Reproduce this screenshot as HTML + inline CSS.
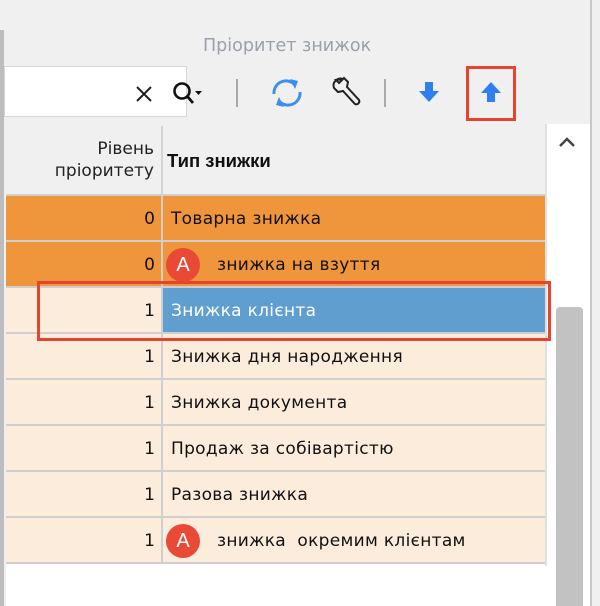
<!DOCTYPE html>
<html><head><meta charset="utf-8"><style>
*{margin:0;padding:0;box-sizing:border-box}
body{width:600px;height:606px;background:#f0f0f0;position:relative;overflow:hidden;font-family:"DejaVu Sans","Liberation Sans",sans-serif}
.abs{position:absolute}
.row{position:absolute;left:6px;width:539px;height:46px;border-bottom:2px solid #cfcfcf;font-size:17px;color:#111}
.row .n{position:absolute;left:0;width:149px;text-align:right;top:13px}
.row .t{position:absolute;left:155px;top:0;bottom:0;right:0;border-left:2px solid #cfcfcf;padding:13px 0 0 8px;letter-spacing:0.3px}
.badge{position:absolute;left:166px;width:34px;height:34px;border-radius:50%;background:#e84a36;color:#fff;font-size:20px;text-align:center;line-height:34px;font-family:"Liberation Sans",sans-serif}
</style></head><body>
<div class="abs" style="left:0;top:30px;width:4px;height:576px;background:#bdbdbd"></div>
<div class="abs" style="left:590px;top:0;width:2px;height:606px;background:#c8c8c8"></div>
<div class="abs" style="left:203px;top:36px;font-size:17.5px;color:#9aa0aa">Пріоритет знижок</div>
<div class="abs" style="left:4px;top:66px;width:183px;height:51px;background:#fff;border:1px solid #d6d6d6"></div>
<svg class="abs" style="left:134px;top:84px" width="20" height="20"><path d="M3 3L17 17M17 3L3 17" stroke="#222" stroke-width="2"/></svg>
<svg class="abs" style="left:168px;top:78px" width="44" height="30"><circle cx="14" cy="13" r="7.5" fill="none" stroke="#111" stroke-width="2.6"/><line x1="19" y1="18" x2="25" y2="25" stroke="#111" stroke-width="2.8"/><path d="M27 13h7l-3.5 4z" fill="#111"/></svg>
<div class="abs" style="left:236px;top:79px;width:2px;height:28px;background:#aaa"></div>
<svg class="abs" style="left:268px;top:76px" width="38" height="34"><path d="M6 18a12 12 0 0 1 20-10" fill="none" stroke="#3a8ff0" stroke-width="3"/><path d="M22 3l8 2-3 8z" fill="#3a8ff0"/><path d="M32 16a12 12 0 0 1-20 10" fill="none" stroke="#3a8ff0" stroke-width="3"/><path d="M16 31l-8-2 3-8z" fill="#3a8ff0"/></svg>
<svg class="abs" style="left:330px;top:76px" width="36" height="34"><path d="M13 3a7 7 0 0 0-9 9l4 4 5-1 12 13a3 3 0 0 0 4-4L17 11l1-5-4-4 -5 5-3-3z" fill="none" stroke="#222" stroke-width="2"/></svg>
<div class="abs" style="left:384px;top:79px;width:2px;height:28px;background:#aaa"></div>
<svg class="abs" style="left:418px;top:80px" width="24" height="24"><path d="M7 2h8v9h6l-10 11L1 11h6z" fill="#2f7ff0"/></svg>
<svg class="abs" style="left:480px;top:80px" width="24" height="24"><path d="M7 22h8v-9h6L11 2 1 13h6z" fill="#2f7ff0"/></svg>
<div class="abs" style="left:466px;top:66px;width:50px;height:55px;border:3px solid #e8432f"></div>
<div class="abs" style="left:6px;top:124px;width:584px;height:482px;background:#fff"></div>
<div class="abs" style="left:6px;top:124px;width:539px;height:72px;background:#f0f0f0;border-bottom:2px solid #cfcfcf"></div>
<div class="abs" style="left:161px;top:126px;width:2px;height:70px;background:#d4d4d4"></div>
<div class="abs" style="left:6px;top:138px;width:148px;text-align:right;font-size:17px;color:#222;line-height:22px">Рівень<br>пріоритету</div>
<div class="abs" style="left:167px;top:150px;font-size:18.5px;font-weight:bold;color:#111;font-family:'Liberation Sans',sans-serif">Тип знижки</div>
<svg class="abs" style="left:558px;top:136px" width="18" height="12"><path d="M2 10L9 3l7 7" fill="none" stroke="#444" stroke-width="2.5"/></svg>
<div class="row" style="top:196px;background:#ef963c"><div class="n">0</div><div class="t">Товарна знижка</div></div>
<div class="row" style="top:242px;background:#ef963c"><div class="n">0</div><div class="t" style="padding-left:54px">знижка на взуття</div></div>
<div class="badge" style="top:248px">A</div>
<div class="row" style="top:288px;background:#fcecdc"><div class="n">1</div><div class="t" style="background:#5f9ece;color:#fff">Знижка клієнта</div></div>
<div class="row" style="top:334px;background:#fcecdc"><div class="n">1</div><div class="t">Знижка дня народження</div></div>
<div class="row" style="top:380px;background:#fcecdc"><div class="n">1</div><div class="t">Знижка документа</div></div>
<div class="row" style="top:426px;background:#fcecdc"><div class="n">1</div><div class="t">Продаж за собівартістю</div></div>
<div class="row" style="top:472px;background:#fcecdc"><div class="n">1</div><div class="t">Разова знижка</div></div>
<div class="row" style="top:518px;background:#fcecdc"><div class="n">1</div><div class="t" style="padding-left:54px">знижка&nbsp; окремим клієнтам</div></div>
<div class="badge" style="top:524px">A</div>
<div class="abs" style="left:545px;top:124px;width:2px;height:442px;background:#e0e0e0"></div>
<div class="abs" style="left:556px;top:307px;width:27px;height:299px;background:#c2c2c2;border-radius:4px 4px 0 0"></div>
<div class="abs" style="left:37px;top:281px;width:514px;height:60px;border:3px solid #e8432f"></div>
</body></html>
